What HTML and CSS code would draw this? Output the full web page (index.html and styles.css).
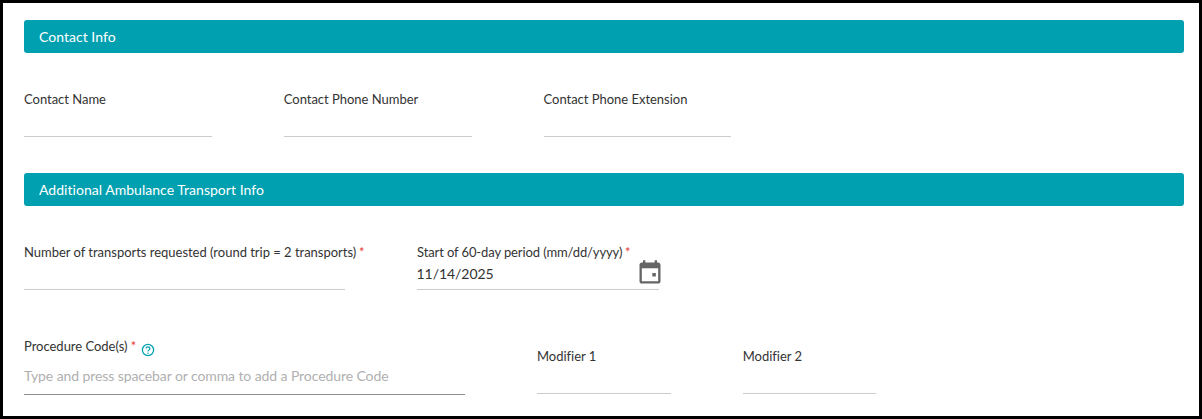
FILE: index.html
```html
<!DOCTYPE html>
<html>
<head>
    <title>Contact Info</title>
    <link rel="stylesheet" href="styles.css">
</head>
<body>
    <div class="frame">
        <div class="section-bar">Contact Info</div>
        <div class="row row-contact">
            <div class="field w-contact">
                <label class="label">Contact Name</label>
                <div class="value"></div>
            </div>
            <div class="field w-contact">
                <label class="label">Contact Phone Number</label>
                <div class="value"></div>
            </div>
            <div class="field w-contact">
                <label class="label">Contact Phone Extension</label>
                <div class="value"></div>
            </div>
        </div>

        <div class="section-bar">Additional Ambulance Transport Info</div>
        <div class="row row-transport">
            <div class="field w-transports">
                <label class="label">Number of transports requested (round trip = 2 transports) <span class="req">*</span></label>
                <div class="value"></div>
            </div>
            <div class="field w-date">
                <label class="label label-tight">Start of 60-day period (mm/dd/yyyy) <span class="req">*</span></label>
                <div class="value value-date">11/14/2025
                    <svg class="cal-icon" viewBox="0 0 24 24" width="28" height="28">
                        <path fill="#666" d="M19 3h-1V1h-2v2H8V1H6v2H5c-1.1 0-2 .9-2 2v14c0 1.1.9 2 2 2h14c1.1 0 2-.9 2-2V5c0-1.1-.9-2-2-2zm0 16H5V8h14v11zm-5-7h3v3h-3z"/>
                    </svg>
                </div>
            </div>
        </div>

        <div class="row row-codes">
            <div class="field w-codes">
                <label class="label">Procedure Code(s) <span class="req req-wide">*</span>
                    <svg class="help-icon" viewBox="0 0 14 14" width="14" height="14">
                        <circle cx="7" cy="7" r="5.6" fill="none" stroke="#00a0b0" stroke-width="1.3"/>
                        <path d="M5.1 5.6c0-1.1.9-1.8 1.9-1.8s1.9.7 1.9 1.7c0 1.400-1.900 1.400-1.900 3" fill="none" stroke="#00a0b0" stroke-width="1.200"/>
                        <circle cx="7" cy="10.200" r=".75" fill="#00a0b0"/>
                    </svg>
                </label>
                <div class="value placeholder">Type and press spacebar or comma to add a Procedure Code</div>
            </div>
            <div class="field w-modifier">
                <label class="label">Modifier 1</label>
                <div class="value"></div>
            </div>
            <div class="field w-modifier">
                <label class="label">Modifier 2</label>
                <div class="value"></div>
            </div>
        </div>
    </div>
</body>
</html>
```
FILE: styles.css
```css
html, body {
    margin: 0;
    padding: 0;
}
body {
    font-family: Lato, "Open Sans", sans-serif;
    font-size: 13px;
    color: #333;
    background: #fff;
}
.frame {
    box-sizing: border-box;
    width: 1202px;
    height: 419px;
    border: 3px solid #000;
    padding: 17px 15px 0 21px;
    overflow: hidden;
}
.section-bar {
    height: 33px;
    line-height: 33px;
    padding-left: 15px;
    background-color: #00a0b0;
    color: #fff;
    font-size: 14px;
    letter-spacing: 0.03px;
    border-radius: 3px;
}
.row {
    display: flex;
    gap: 72px;
}
.row-contact {
    margin-top: 38px;
    margin-bottom: 36px;
}
.row-transport {
    margin-top: 38px;
}
.row-codes {
    margin-top: 48px;
}
.field {
    display: flex;
    flex-direction: column;
}
.w-contact {
    width: 187.75px;
}
.w-transports {
    width: 321px;
}
.w-date {
    width: 242px;
}
.w-codes {
    width: 441px;
}
.w-modifier {
    width: 133.7px;
    margin-top: 10px;
}
.label {
    height: 16px;
    line-height: 16px;
    white-space: nowrap;
    letter-spacing: -0.02px;
}
.label-tight {
    letter-spacing: -0.11px;
}
.req {
    color: #e53935;
    margin-left: -0.5px;
}
.req-wide {
    margin-left: 0;
}
.value {
    position: relative;
    height: 29px;
    line-height: 29px;
    font-size: 14px;
    border-bottom: 1px solid #ccc;
}
.value-date {
    line-height: 27px;
    margin-left: -0.5px;
    letter-spacing: -0.05px;
}
.placeholder {
    height: 40px;
    line-height: 44px;
    color: #b0b0b0;
    letter-spacing: -0.09px;
    border-bottom-color: #8e8e8e;
}
.cal-icon {
    position: absolute;
    right: -4.5px;
    top: -1px;
}
.help-icon {
    vertical-align: -6px;
    margin-left: 1px;
}
```
